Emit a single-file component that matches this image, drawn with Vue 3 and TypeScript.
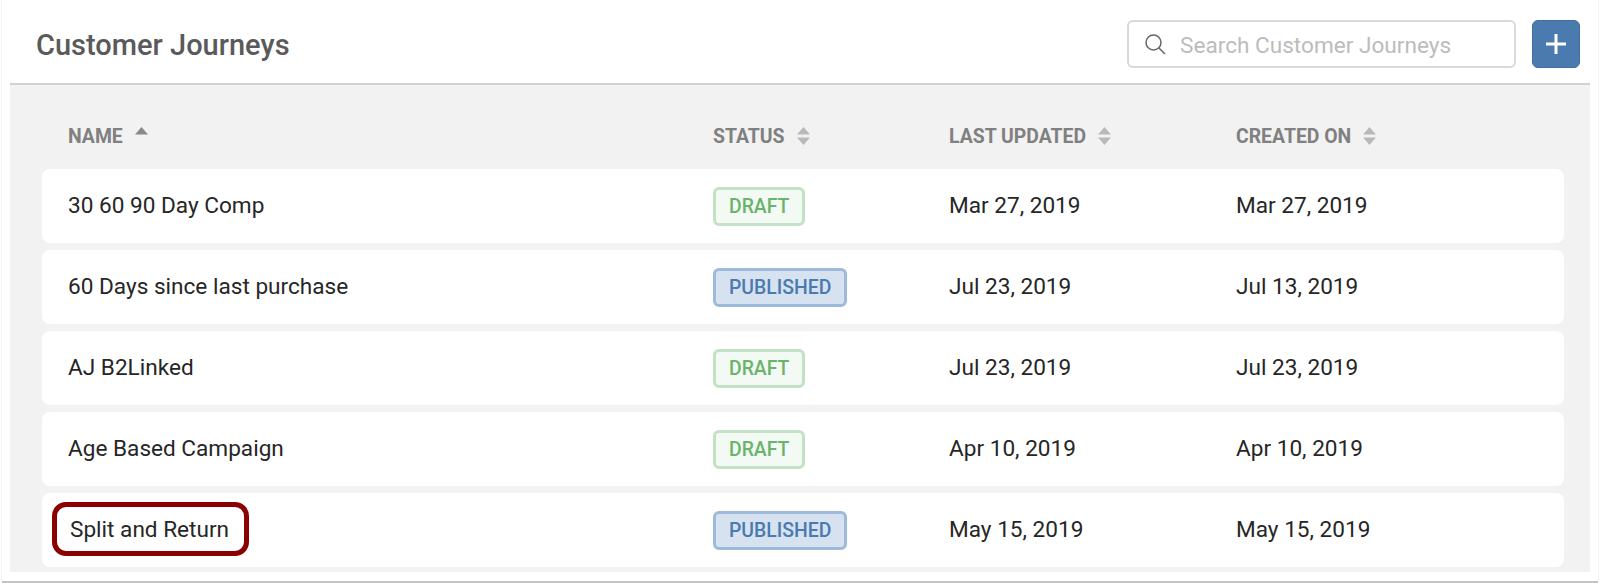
<script setup lang="ts">
interface Journey {
  name: string;
  status: 'DRAFT' | 'PUBLISHED';
  updated: string;
  created: string;
  marked?: boolean;
}

const columns = [
  { label: 'NAME', sort: 'asc' },
  { label: 'STATUS', sort: 'none' },
  { label: 'LAST UPDATED', sort: 'none' },
  { label: 'CREATED ON', sort: 'none' },
];

const journeys: Journey[] = [
  { name: '30 60 90 Day Comp', status: 'DRAFT', updated: 'Mar 27, 2019', created: 'Mar 27, 2019' },
  { name: '60 Days since last purchase', status: 'PUBLISHED', updated: 'Jul 23, 2019', created: 'Jul 13, 2019' },
  { name: 'AJ B2Linked', status: 'DRAFT', updated: 'Jul 23, 2019', created: 'Jul 23, 2019' },
  { name: 'Age Based Campaign', status: 'DRAFT', updated: 'Apr 10, 2019', created: 'Apr 10, 2019' },
  { name: 'Split and Return', status: 'PUBLISHED', updated: 'May 15, 2019', created: 'May 15, 2019', marked: true },
];
</script>

<template>
  <div class="page">
    <header class="top">
      <h1 class="title">Customer Journeys</h1>
      <div class="tools">
        <label class="search">
          <svg class="search-icon" width="22" height="22" viewBox="0 0 22 22" fill="none" stroke="#666" stroke-width="1.5">
            <circle cx="9.5" cy="9.5" r="7.5" />
            <path d="M15 15 L21 21" />
          </svg>
          <input type="text" placeholder="Search Customer Journeys" />
        </label>
        <button class="add" type="button" aria-label="Add">
          <svg width="20" height="20" viewBox="0 0 20 20" fill="#fff">
            <rect x="8.5" y="0" width="3" height="20" />
            <rect x="0" y="8.5" width="20" height="3" />
          </svg>
        </button>
      </div>
    </header>

    <section class="panel">
      <div class="head grid">
        <div v-for="col in columns" :key="col.label" class="head-cell">
          <span>{{ col.label }}</span>
          <svg v-if="col.sort === 'asc'" class="sort" width="13" height="18" viewBox="0 0 13 18">
            <path d="M6.5 0 L13 7.5 H0 Z" fill="#8a8a8a" />
          </svg>
          <svg v-else class="sort" width="13" height="18" viewBox="0 0 13 18">
            <path d="M6.5 0 L13 7.5 H0 Z M0 10.5 H13 L6.5 18 Z" fill="#b9b9b9" />
          </svg>
        </div>
      </div>

      <div class="rows">
        <div v-for="j in journeys" :key="j.name" class="row grid">
          <div class="name" :class="{ marked: j.marked }">
            <span>{{ j.name }}</span>
            <i v-if="j.marked" class="ring"></i>
          </div>
          <div class="status-cell">
            <span class="badge" :class="j.status.toLowerCase()">{{ j.status }}</span>
          </div>
          <div>{{ j.updated }}</div>
          <div>{{ j.created }}</div>
        </div>
      </div>
    </section>

    <div class="bottom-line"></div>
  </div>
</template>

<style>
html,
body {
  margin: 0;
  background: #fff;
}
</style>

<style scoped>
.page {
  width: 1598px;
  height: 583px;
  margin-left: 1px;
  box-sizing: border-box;
  padding: 0 8px;
  border-left: 1px solid #f5f5f5;
  border-right: 1px solid #f5f5f5;
  font-family: Roboto, "Liberation Sans", sans-serif;
  overflow: hidden;
}

.top {
  height: 85px;
  box-sizing: border-box;
  padding: 20px 10px 0 26px;
  display: flex;
  justify-content: space-between;
  align-items: flex-start;
  border-bottom: 2px solid #d2d2d2;
}

.title {
  margin: 0;
  font-size: 29px;
  line-height: 50px;
  font-weight: 500;
  color: #5a5a5a;
}

.tools {
  display: flex;
  gap: 16px;
}

.search {
  width: 389px;
  height: 48px;
  box-sizing: border-box;
  border: 2px solid #d9d9d9;
  border-radius: 6px;
  display: flex;
  align-items: center;
  padding-left: 15px;
  gap: 14px;
  background: #fff;
}

.search-icon {
  flex: none;
}

.search input {
  flex: 1;
  min-width: 0;
  border: 0;
  outline: 0;
  padding: 2px 0 0;
  background: transparent;
  font-family: inherit;
  font-size: 22.6px;
  color: #333;
}

.search input::placeholder {
  color: #bcbcbc;
  opacity: 1;
}

.add {
  width: 48px;
  height: 48px;
  border: 1px solid #3f6ea5;
  border-radius: 6px;
  background: #4a7aae;
  padding: 0;
  display: flex;
  align-items: center;
  justify-content: center;
}

.panel {
  background: #f2f2f2;
  padding: 0 26px 5px 32px;
  height: 487px;
  box-sizing: border-box;
}

.grid {
  display: grid;
  grid-template-columns: 645px 236px 287px 1fr;
  align-items: center;
}

.head {
  height: 84px;
  padding: 18px 0 0 26px;
  box-sizing: border-box;
}

.head-cell {
  display: flex;
  align-items: center;
  gap: 12px;
  font-size: 19.4px;
  font-weight: 700;
  color: #808080;
}

.sort {
  flex: none;
}

.rows {
  display: flex;
  flex-direction: column;
  gap: 7px;
}

.row {
  height: 74px;
  box-sizing: border-box;
  padding: 0 0 2px 26px;
  background: #fff;
  border-radius: 8px;
  font-size: 22.6px;
  color: #262626;
}

.name {
  position: relative;
}

.marked span {
  margin-left: 2px;
}

.ring {
  position: absolute;
  left: -16px;
  top: -14px;
  width: 197px;
  height: 54px;
  box-sizing: border-box;
  border: 5px solid #8b0000;
  border-radius: 14px;
}

.status-cell {
  margin-bottom: -2px;
}

.badge {
  display: inline-block;
  box-sizing: border-box;
  height: 39px;
  line-height: 33px;
  padding: 0 13px;
  border: 3px solid;
  border-radius: 6px;
  font-size: 19.4px;
  font-weight: 500;
  vertical-align: middle;
}

.draft {
  color: #69b36c;
  background: #f3f9f3;
  border-color: #c3e1c4;
}

.published {
  color: #4a7aae;
  background: #d6e2f0;
  border-color: #9dbadb;
}

.bottom-line {
  height: 2px;
  margin: 9px -8px 0;
  background: #c4c4c4;
}
</style>
